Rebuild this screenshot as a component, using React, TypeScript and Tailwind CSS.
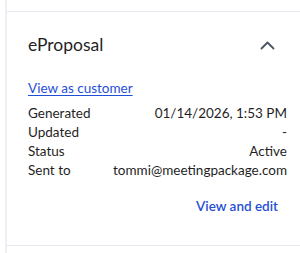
export default function App() {
  const rows = [
    { label: "Generated", value: "01/14/2026, 1:53 PM" },
    { label: "Updated", value: "-" },
    { label: "Status", value: "Active" },
    { label: "Sent to", value: "tommi@meetingpackage.com" },
  ];

  return (
    <div
      className="w-[300px] h-[253px] bg-white pl-[5px] overflow-hidden"
      style={{ fontFamily: "Lato, 'Noto Sans', sans-serif" }}
    >
      <div className="h-full border-l-2 border-[#eeeff5] pt-[11px]">
        <div className="border-t border-b border-[#e4e9f0] h-[235px] flex flex-col">
          <div className="flex items-center justify-between pl-[21px] pr-[25px] mt-[19px] h-[28px]">
            <h2 className="text-[17.5px] text-[#1f1f1f]">eProposal</h2>
            <svg width="15" height="9" viewBox="0 0 15 9" fill="none">
              <path d="M1.5 7.5 L7.5 1.5 L13.5 7.5" stroke="#4b5563" strokeWidth="1.8" strokeLinecap="round" strokeLinejoin="round" />
            </svg>
          </div>

          <a href="#" className="mt-[19px] ml-[21px] self-start text-[13.5px] leading-[20px] text-[#1f4fd6] underline underline-offset-2">
            View as customer
          </a>

          <div className="mt-[6px] pl-[21px] pr-[13px] flex flex-col">
            {rows.map((r) => (
              <div key={r.label} className="flex justify-between text-[13.5px] leading-[19px] text-[#1f1f1f]">
                <span>{r.label}</span>
                <span>{r.value}</span>
              </div>
            ))}
          </div>

          <div className="flex justify-end pr-[22px] mt-[16px]">
            <button className="text-[13.5px] leading-[20px] text-[#1f4fd6] font-semibold">View and edit</button>
          </div>
        </div>
      </div>
    </div>
  );
}
